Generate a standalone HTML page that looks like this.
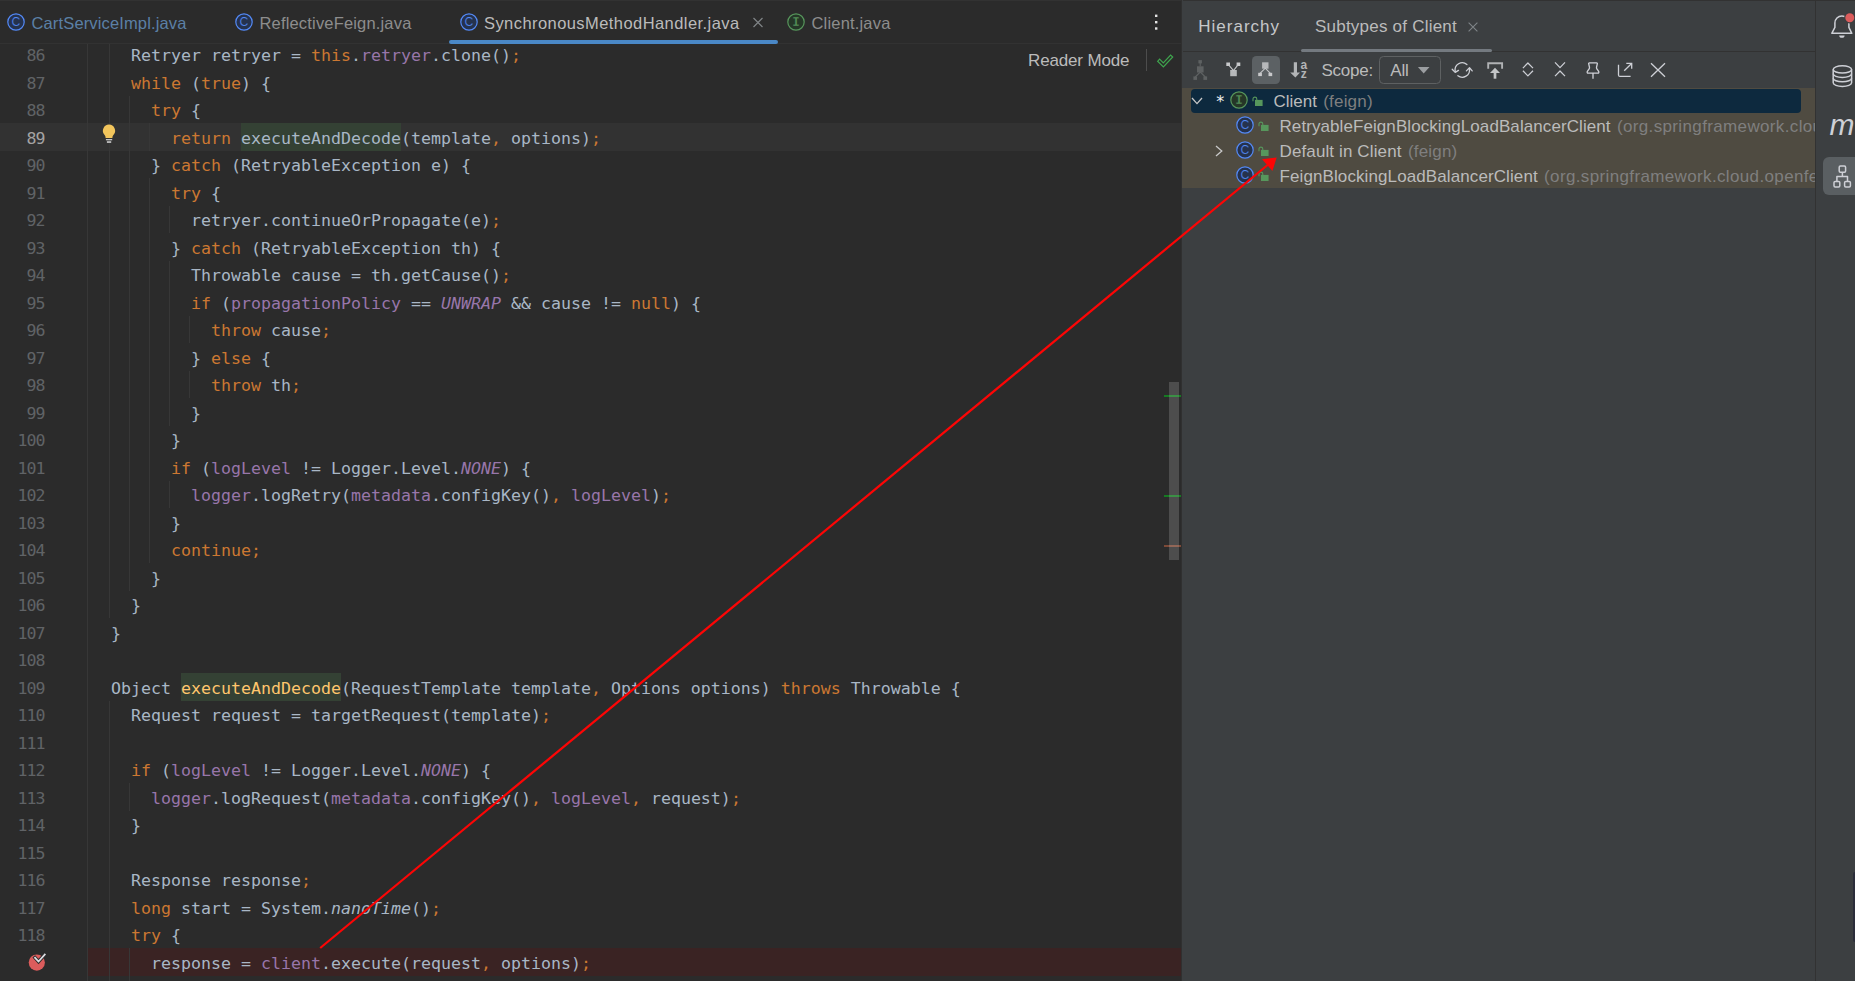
<!DOCTYPE html>
<html lang="en">
<head>
<meta charset="utf-8">
<title>SynchronousMethodHandler.java</title>
<style>
html,body{margin:0;padding:0;}
body{width:1855px;height:981px;overflow:hidden;background:#2b2b2b;position:relative;font-family:"Liberation Sans",sans-serif;color:#bbbbbb;}
.abs{position:absolute;}
#editor{position:absolute;left:0;top:0;width:1182px;height:981px;background:#2b2b2b;overflow:hidden;}
#code{position:absolute;left:0;top:0;width:1182px;height:981px;overflow:hidden;}
.cl{position:absolute;white-space:pre;font-family:"DejaVu Sans Mono","Liberation Mono",monospace;font-size:16.6px;line-height:27.5px;height:27.5px;color:#a9b7c6;letter-spacing:0.007px;}
.ln{position:absolute;left:0;width:44.4px;text-align:right;white-space:pre;font-family:"DejaVu Sans Mono","Liberation Mono",monospace;font-size:16.6px;line-height:27.5px;height:27.5px;color:#606366;letter-spacing:-1px;}
.ln.cur{color:#a4a3a3;}
.k{color:#cc7832;}
.f{color:#9876aa;}
.fi{color:#9876aa;font-style:italic;}
.i{font-style:italic;}
.hr{}
.hd{color:#ffc66d;}
.hl{position:absolute;background:#344134;}
.ig{position:absolute;width:1px;background:#373737;}
#curline{position:absolute;left:0;top:123px;width:1182px;height:28px;background:#323232;}
#bpline{position:absolute;left:88px;top:948px;width:1094px;height:28px;background:#3a2323;}
#gsep{position:absolute;left:87px;top:44px;width:1px;height:937px;background:#373737;}
#tabs{position:absolute;left:0;top:0;width:1182px;height:43px;background:#2b2b2b;border-bottom:1px solid #323232;}
.tab{position:absolute;top:1px;height:43px;line-height:45px;font-size:16.5px;white-space:pre;color:#a9a9a9;}
#hier{position:absolute;left:1183px;top:0;width:632px;height:981px;background:#3c3f41;}
#stripe{position:absolute;left:1815px;top:0;width:40px;height:981px;background:#3c3f41;border-left:1px solid #323232;box-sizing:border-box;}
.ui{position:absolute;white-space:pre;}

.topline{position:absolute;left:0;top:0;width:100%;height:1px;background:#323232;}
#tabline{position:absolute;left:449px;top:40px;width:329px;height:4px;border-radius:2px;background:#4a88c7;}
#hier .hsep{position:absolute;left:0;top:51px;width:632px;height:1px;background:#323232;}
#hier .htop{position:absolute;left:0;top:0;width:672px;height:1px;background:#323232;}
#tree{position:absolute;left:0;top:88.4px;width:632px;height:99.85px;background:#4f4b41;overflow:hidden;}
.trow{position:absolute;left:0;width:632px;height:25px;}
.tt{position:absolute;white-space:pre;font-size:17px;line-height:24px;top:1px;color:#bbbbbb;}
.tg{color:#7f7f7f;letter-spacing:0.2px;margin-left:1.5px;}
</style>
</head>
<body>
<div id="editor">
  <div id="curline"></div>
  <div id="bpline"></div>
  <div id="code">
<div class="ig" style="left:109.0px;top:40.5px;height:577.5px"></div>
<div class="ig" style="left:109.0px;top:700.5px;height:302.5px"></div>
<div class="ig" style="left:129.0px;top:95.5px;height:495.0px"></div>
<div class="ig" style="left:129.0px;top:783.0px;height:27.5px"></div>
<div class="ig" style="left:129.0px;top:948.0px;height:55.0px"></div>
<div class="ig" style="left:149.0px;top:123.0px;height:27.5px"></div>
<div class="ig" style="left:149.0px;top:178.0px;height:385.0px"></div>
<div class="ig" style="left:169.0px;top:205.5px;height:27.5px"></div>
<div class="ig" style="left:169.0px;top:260.5px;height:165.0px"></div>
<div class="ig" style="left:169.0px;top:480.5px;height:27.5px"></div>
<div class="ig" style="left:189.0px;top:315.5px;height:27.5px"></div>
<div class="ig" style="left:189.0px;top:370.5px;height:27.5px"></div>
<div class="hl" style="left:241px;top:123px;width:160px;height:28px"></div>
<div class="hl" style="left:181px;top:673px;width:160px;height:28px"></div>
<div class="ln" style="top:42px">86</div>
<div class="cl" style="top:42px;left:131.0px">Retryer retryer = <span class="k">this</span>.<span class="f">retryer</span>.clone()<span class="k">;</span></div>
<div class="ln" style="top:70px">87</div>
<div class="cl" style="top:70px;left:131.0px"><span class="k">while</span> (<span class="k">true</span>) {</div>
<div class="ln" style="top:97px">88</div>
<div class="cl" style="top:97px;left:151.0px"><span class="k">try</span> {</div>
<div class="ln cur" style="top:125px">89</div>
<div class="cl" style="top:125px;left:171.0px"><span class="k">return</span> <span class="hr">executeAndDecode</span>(template<span class="k">,</span> options)<span class="k">;</span></div>
<div class="ln" style="top:152px">90</div>
<div class="cl" style="top:152px;left:151.0px">} <span class="k">catch</span> (RetryableException e) {</div>
<div class="ln" style="top:180px">91</div>
<div class="cl" style="top:180px;left:171.0px"><span class="k">try</span> {</div>
<div class="ln" style="top:207px">92</div>
<div class="cl" style="top:207px;left:191.0px">retryer.continueOrPropagate(e)<span class="k">;</span></div>
<div class="ln" style="top:235px">93</div>
<div class="cl" style="top:235px;left:171.0px">} <span class="k">catch</span> (RetryableException th) {</div>
<div class="ln" style="top:262px">94</div>
<div class="cl" style="top:262px;left:191.0px">Throwable cause = th.getCause()<span class="k">;</span></div>
<div class="ln" style="top:290px">95</div>
<div class="cl" style="top:290px;left:191.0px"><span class="k">if</span> (<span class="f">propagationPolicy</span> == <span class="fi">UNWRAP</span> &amp;&amp; cause != <span class="k">null</span>) {</div>
<div class="ln" style="top:317px">96</div>
<div class="cl" style="top:317px;left:211.0px"><span class="k">throw</span> cause<span class="k">;</span></div>
<div class="ln" style="top:345px">97</div>
<div class="cl" style="top:345px;left:191.0px">} <span class="k">else</span> {</div>
<div class="ln" style="top:372px">98</div>
<div class="cl" style="top:372px;left:211.0px"><span class="k">throw</span> th<span class="k">;</span></div>
<div class="ln" style="top:400px">99</div>
<div class="cl" style="top:400px;left:191.0px">}</div>
<div class="ln" style="top:427px">100</div>
<div class="cl" style="top:427px;left:171.0px">}</div>
<div class="ln" style="top:455px">101</div>
<div class="cl" style="top:455px;left:171.0px"><span class="k">if</span> (<span class="f">logLevel</span> != Logger.Level.<span class="fi">NONE</span>) {</div>
<div class="ln" style="top:482px">102</div>
<div class="cl" style="top:482px;left:191.0px"><span class="f">logger</span>.logRetry(<span class="f">metadata</span>.configKey()<span class="k">,</span> <span class="f">logLevel</span>)<span class="k">;</span></div>
<div class="ln" style="top:510px">103</div>
<div class="cl" style="top:510px;left:171.0px">}</div>
<div class="ln" style="top:537px">104</div>
<div class="cl" style="top:537px;left:171.0px"><span class="k">continue;</span></div>
<div class="ln" style="top:565px">105</div>
<div class="cl" style="top:565px;left:151.0px">}</div>
<div class="ln" style="top:592px">106</div>
<div class="cl" style="top:592px;left:131.0px">}</div>
<div class="ln" style="top:620px">107</div>
<div class="cl" style="top:620px;left:111.0px">}</div>
<div class="ln" style="top:647px">108</div>
<div class="ln" style="top:675px">109</div>
<div class="cl" style="top:675px;left:111.0px">Object <span class="hd">executeAndDecode</span>(RequestTemplate template<span class="k">,</span> Options options) <span class="k">throws</span> Throwable {</div>
<div class="ln" style="top:702px">110</div>
<div class="cl" style="top:702px;left:131.0px">Request request = targetRequest(template)<span class="k">;</span></div>
<div class="ln" style="top:730px">111</div>
<div class="ln" style="top:757px">112</div>
<div class="cl" style="top:757px;left:131.0px"><span class="k">if</span> (<span class="f">logLevel</span> != Logger.Level.<span class="fi">NONE</span>) {</div>
<div class="ln" style="top:785px">113</div>
<div class="cl" style="top:785px;left:151.0px"><span class="f">logger</span>.logRequest(<span class="f">metadata</span>.configKey()<span class="k">,</span> <span class="f">logLevel</span><span class="k">,</span> request)<span class="k">;</span></div>
<div class="ln" style="top:812px">114</div>
<div class="cl" style="top:812px;left:131.0px">}</div>
<div class="ln" style="top:840px">115</div>
<div class="ln" style="top:867px">116</div>
<div class="cl" style="top:867px;left:131.0px">Response response<span class="k">;</span></div>
<div class="ln" style="top:895px">117</div>
<div class="cl" style="top:895px;left:131.0px"><span class="k">long</span> start = System.<span class="i">nanoTime</span>()<span class="k">;</span></div>
<div class="ln" style="top:922px">118</div>
<div class="cl" style="top:922px;left:131.0px"><span class="k">try</span> {</div>
<div class="ln" style="top:950px"></div>
<div class="cl" style="top:950px;left:151.0px">response = <span class="f">client</span>.execute(request<span class="k">,</span> options)<span class="k">;</span></div>
  </div>
  <div id="gsep"></div>
  <div id="tabs">
    <div class="topline"></div>
    <svg class="abs" style="left:7px;top:13px" width="18" height="18" viewBox="0 0 18 18"><circle cx="9" cy="9" r="8.2" fill="#25324d" stroke="#548af7" stroke-width="1.2"/><text x="9" y="13.3" text-anchor="middle" font-family="Liberation Sans, sans-serif" font-size="12.2" fill="#548af7" stroke="#25324d" stroke-width="0.2">C</text></svg>
    <div class="tab" style="left:31.5px;color:#5b80a6;letter-spacing:0.14px">CartServiceImpl.java</div>
    <svg class="abs" style="left:235px;top:13px" width="18" height="18" viewBox="0 0 18 18"><circle cx="9" cy="9" r="8.2" fill="#25324d" stroke="#548af7" stroke-width="1.2"/><text x="9" y="13.3" text-anchor="middle" font-family="Liberation Sans, sans-serif" font-size="12.2" fill="#548af7" stroke="#25324d" stroke-width="0.2">C</text></svg>
    <div class="tab" style="left:259.5px;color:#8d8d8d;letter-spacing:0.17px">ReflectiveFeign.java</div>
    <svg class="abs" style="left:460px;top:13px" width="18" height="18" viewBox="0 0 18 18"><circle cx="9" cy="9" r="8.2" fill="#25324d" stroke="#548af7" stroke-width="1.2"/><text x="9" y="13.3" text-anchor="middle" font-family="Liberation Sans, sans-serif" font-size="12.2" fill="#548af7" stroke="#25324d" stroke-width="0.2">C</text></svg>
    <div class="tab" style="left:484px;color:#bbbbbb;letter-spacing:0.43px">SynchronousMethodHandler.java</div>
    <svg class="abs" style="left:752px;top:17px" width="12" height="12" viewBox="0 0 12 12"><path d="M1.5 1 L10.5 10 M10.5 1 L1.5 10" stroke="#7f8386" stroke-width="1.2" fill="none"/></svg>
    <div id="tabline"></div>
    <svg class="abs" style="left:787px;top:13px" width="18" height="18" viewBox="0 0 18 18"><circle cx="9" cy="9" r="8.2" fill="#253627" stroke="#57965c" stroke-width="1.2"/><text x="9" y="13" text-anchor="middle" font-family="Liberation Mono, monospace" font-size="12.5" font-weight="bold" fill="#57965c" stroke="#253627" stroke-width="0.3">I</text></svg>
    <div class="tab" style="left:811.5px;color:#8d8d8d;letter-spacing:0.18px">Client.java</div>
    <svg class="abs" style="left:1152px;top:12px" width="8" height="20" viewBox="0 0 8 20"><rect x="3" y="2.6" width="2.4" height="2.4" fill="#e4e4e4"/><rect x="3" y="9" width="2.4" height="2.4" fill="#e4e4e4"/><rect x="3" y="15.3" width="2.4" height="2.4" fill="#e4e4e4"/></svg>
  </div>
  <div class="ui" style="left:1028px;top:49px;font-size:17px;line-height:24px;color:#bbbbbb;letter-spacing:-0.15px">Reader Mode</div>
  <div class="abs" style="left:1146px;top:49px;width:1px;height:22px;background:#4d4d4d"></div>
  <svg class="abs" style="left:1155px;top:52px" width="20" height="18" viewBox="0 0 20 18"><path d="M2.6 9.3 L4.6 7.2 L8.3 10.9 L15.6 3 L17.7 5 L8.4 15 Z" fill="none" stroke="#3fa54e" stroke-width="1.2" stroke-linejoin="miter"/></svg>
  <div class="abs" style="left:1164px;top:395px;width:17px;height:2px;background:#167a22"></div>
  <div class="abs" style="left:1164px;top:495px;width:17px;height:2px;background:#167a22"></div>
  <div class="abs" style="left:1164px;top:545px;width:17px;height:2px;background:#7d4a38"></div>
  <div class="abs" style="left:1169px;top:382px;width:10px;height:178px;background:rgba(255,255,255,0.165)"></div>
  <svg class="abs" style="left:100px;top:122px" width="18" height="24" viewBox="0 0 18 24"><path d="M9 2.6 a6.1 6.1 0 0 1 4.6 10.1 c-0.9 1.1 -1.2 2 -1.2 3.3 h-6.8 c0 -1.3 -0.3 -2.2 -1.2 -3.3 A6.1 6.1 0 0 1 9 2.6 Z" fill="#f2c55c"/><rect x="5.9" y="17.1" width="6.3" height="1.2" fill="#d4d4d4"/><rect x="6.9" y="19.2" width="4.3" height="1.7" fill="#c4c4c4"/></svg>
  <svg class="abs" style="left:26px;top:950px" width="24" height="24" viewBox="0 0 24 24"><circle cx="10.8" cy="12.6" r="8.1" fill="#db5c5c"/><path d="M9 7.7 L12.5 11.5 L18.8 4.5" fill="none" stroke="#2b2b2b" stroke-width="3.6" stroke-linecap="square"/><path d="M9 7.7 L12.5 11.5 L18.8 4.5" fill="none" stroke="#dcdde2" stroke-width="1.7" stroke-linecap="square"/></svg>
</div>
<div class="abs" style="left:1182px;top:0;width:1px;height:981px;background:#3c3f41"></div>
<div class="abs" style="left:1182px;top:88.4px;width:1px;height:99.85px;background:#4f4b41"></div>
<div class="abs" style="left:1181px;top:0;width:1px;height:981px;background:#303030"></div>
<div id="hier">
  <div class="htop"></div>
  <div class="ui" style="left:15.3px;top:15px;font-size:17px;line-height:24px;color:#c6c8ca;letter-spacing:1px">Hierarchy</div>
  <div class="ui" style="left:132px;top:15px;font-size:17px;line-height:24px;color:#bbbbbb;letter-spacing:0.22px">Subtypes of Client</div>
  <svg class="abs" style="left:284px;top:21px" width="12" height="12" viewBox="0 0 12 12"><path d="M1.6 1.6 L10.4 10.4 M10.4 1.6 L1.6 10.4" stroke="#7f8488" stroke-width="1.1" fill="none"/></svg>
  <div class="hsep"></div>
  <div class="abs" style="left:117.5px;top:48.6px;width:191.5px;height:3.5px;border-radius:2px;background:#747a80"></div>

  <!-- toolbar -->
  <svg class="abs" style="left:7px;top:56px" width="22" height="28" viewBox="0 0 22 28">
    <g fill="#5e6162" stroke="none"><rect x="8.4" y="4.1" width="3.5" height="3.3"/><rect x="7" y="10.3" width="6.6" height="6.2"/><rect x="3.4" y="20.4" width="3.6" height="3.5"/><rect x="13.4" y="20.4" width="3.7" height="3.5"/></g>
    <path d="M10.2 7 V10.5 M10.3 16 L5.2 21 M10.3 16 L15.3 21" stroke="#5e6162" stroke-width="1.1" fill="none"/>
  </svg>
  <svg class="abs" style="left:40px;top:56px" width="22" height="28" viewBox="0 0 22 28">
    <g stroke="none"><rect x="3.3" y="6.5" width="3.7" height="3.5" fill="#c8c9cb"/><rect x="13.6" y="6.5" width="3.7" height="3.5" fill="#c8c9cb"/><rect x="7.2" y="14" width="6.6" height="6.2" fill="#b6b8ba"/></g>
    <path d="M5.4 8.6 L10.5 14.6 L15.2 8.6" stroke="#c3c5c7" stroke-width="1.15" fill="none"/>
  </svg>
  <div class="abs" style="left:69px;top:56px;width:28px;height:28px;border-radius:4.5px;background:#5c6164"></div>
  <svg class="abs" style="left:72px;top:56px" width="22" height="28" viewBox="0 0 22 28">
    <g stroke="none"><rect x="7.1" y="6.3" width="6.4" height="6.4" fill="#b6b8ba"/><rect x="3.2" y="16.8" width="3.7" height="3.3" fill="#c8c9cb"/><rect x="13.5" y="16.8" width="3.7" height="3.3" fill="#c8c9cb"/></g>
    <path d="M5 17.4 L10.3 12.2 L15.4 17.4" stroke="#c3c5c7" stroke-width="1.15" fill="none"/>
  </svg>
  <svg class="abs" style="left:105px;top:56px" width="22" height="28" viewBox="0 0 22 28">
    <path d="M5.8 6.2 H9 V16.4 H12 L7.4 21.6 L2.2 16.4 H5.8 Z" fill="#b2b4b6"/>
    <text x="12.6" y="13" font-family="Liberation Sans, sans-serif" font-size="12" font-weight="bold" fill="#b2b4b6">a</text>
    <text x="12.8" y="21.7" font-family="Liberation Sans, sans-serif" font-size="12" font-weight="bold" fill="#b2b4b6">z</text>
  </svg>
  <div class="ui" style="left:138.5px;top:59px;font-size:17px;line-height:24px;color:#bbbbbb;letter-spacing:-0.25px">Scope:</div>
  <div class="abs" style="left:196px;top:56px;width:62px;height:27.5px;box-sizing:border-box;border:1px solid #5e6162;border-radius:4.5px"></div>
  <div class="ui" style="left:207.3px;top:59px;font-size:17px;line-height:24px;color:#bbbbbb;letter-spacing:-0.2px">All</div>
  <svg class="abs" style="left:234px;top:66px" width="14" height="9" viewBox="0 0 14 9"><path d="M0.9 1 H12.5 L6.7 7.4 Z" fill="#9b9ea1"/></svg>

  <!-- refresh -->
  <svg class="abs" style="left:267px;top:58px" width="24" height="24" viewBox="0 0 24 24" fill="none" stroke="#ced0d6" stroke-width="1.3" stroke-linecap="round" stroke-linejoin="round">
    <path d="M16.9 6.5 A7.2 7.2 0 0 0 5.2 13.4"/><path d="M2.2 11.2 L5.2 14.4 L8.5 12.4"/>
    <path d="M7.9 17.7 A7.2 7.2 0 0 0 19.4 10.8"/><path d="M16.4 12.9 L19.5 9.8 L22.2 12.9"/>
  </svg>
  <!-- export / autoscroll -->
  <svg class="abs" style="left:300px;top:58px" width="24" height="24" viewBox="0 0 24 24" fill="none" stroke="#b0b2b4" stroke-width="1.4">
    <path d="M5.2 10.7 V5.2 H19.1 V10.7" stroke-width="1.9"/><path d="M12 20.7 V13" stroke="#c3c5c7" stroke-width="2.7"/><path d="M7 15 L12 9.8 L17 15 Z" fill="#c3c5c7" stroke="none"/>
  </svg>
  <!-- expand all -->
  <svg class="abs" style="left:333px;top:58px" width="24" height="24" viewBox="0 0 24 24" fill="none" stroke="#ced0d6" stroke-width="1.25" stroke-linejoin="round">
    <path d="M6.9 10.1 L11.9 5 L17 10.1"/><path d="M6.9 12.8 L11.9 17.9 L17 12.8"/>
  </svg>
  <!-- collapse all -->
  <svg class="abs" style="left:365px;top:58px" width="24" height="24" viewBox="0 0 24 24" fill="none" stroke="#ced0d6" stroke-width="1.25" stroke-linejoin="round">
    <path d="M7 4.4 L12 9.6 L17 4.4"/><path d="M7 18.1 L12 13 L17 18.1"/>
  </svg>
  <!-- pin -->
  <svg class="abs" style="left:398px;top:58px" width="24" height="24" viewBox="0 0 24 24" fill="none" stroke="#ced0d6" stroke-width="1.35" stroke-linejoin="round">
    <path d="M8.4 4.9 H15.6 Q16.5 4.9 16.3 5.8 L15.5 9.4 Q15.4 10.4 16.1 11.2 L17.6 13.3 Q18.3 15.1 16.8 15.1 H7.2 Q5.7 15.1 6.4 13.3 L7.9 11.2 Q8.6 10.4 8.5 9.4 L7.7 5.8 Q7.5 4.9 8.4 4.9 Z"/><path d="M12 15.1 V20.7"/>
  </svg>
  <!-- open in window -->
  <svg class="abs" style="left:430px;top:58px" width="24" height="24" viewBox="0 0 24 24" fill="none" stroke="#ced0d6" stroke-width="1.3">
    <path d="M5.5 6.8 V16.9 Q5.5 18.4 7 18.4 H17.6"/><path d="M11.2 12.8 L18.6 5.5"/><path d="M13.3 5.4 H18.7 V10.7"/>
  </svg>
  <!-- close -->
  <svg class="abs" style="left:463px;top:58px" width="24" height="24" viewBox="0 0 24 24" fill="none" stroke="#ced0d6" stroke-width="1.3">
    <path d="M5 5.3 L19 18.7 M19 5.3 L5 18.7"/>
  </svg>

  <div id="tree">
    <div class="abs" style="left:7.5px;top:0.3px;width:610px;height:24.2px;border-radius:4px;background:#0d293e"></div>
    <div class="trow" style="top:0.6px">
      <svg class="abs" style="left:7px;top:6px" width="14" height="12" viewBox="0 0 14 12"><path d="M2 3 L7 8.6 L12 3" fill="none" stroke="#c8c8c8" stroke-width="1.3"/></svg>
      <div class="tt" style="left:33.2px;top:1px;font-family:'DejaVu Sans',sans-serif;font-size:16px;color:#f0f0f0;line-height:24px">*</div>
      <svg class="abs" style="left:47px;top:2.5px" width="18" height="18" viewBox="0 0 18 18"><circle cx="9" cy="9" r="8.2" fill="#253627" stroke="#57965c" stroke-width="1.2"/><text x="9" y="13" text-anchor="middle" font-family="Liberation Mono, monospace" font-size="12.5" font-weight="bold" fill="#57965c" stroke="#253627" stroke-width="0.3">I</text></svg>
      <svg class="abs" style="left:68.7px;top:7px" width="12" height="11" viewBox="0 0 12 11"><path d="M1 5.2 V3 a1.9 1.9 0 0 1 3.8 0 V4" fill="none" stroke="#57965c" stroke-width="1.1"/><rect x="3" y="3.9" width="7.6" height="6.1" fill="#57965c"/></svg>
      <div class="tt" style="left:90.5px;letter-spacing:0px">Client <span class="tg">(feign)</span></div>
    </div>
    <div class="trow" style="top:25.6px">
      <svg class="abs" style="left:53px;top:2.5px" width="18" height="18" viewBox="0 0 18 18"><circle cx="9" cy="9" r="8.2" fill="#25324d" stroke="#548af7" stroke-width="1.2"/><text x="9" y="13.3" text-anchor="middle" font-family="Liberation Sans, sans-serif" font-size="12.2" fill="#548af7" stroke="#25324d" stroke-width="0.2">C</text></svg>
      <svg class="abs" style="left:74.7px;top:7px" width="12" height="11" viewBox="0 0 12 11"><path d="M1 5.2 V3 a1.9 1.9 0 0 1 3.8 0 V4" fill="none" stroke="#57965c" stroke-width="1.1"/><rect x="3" y="3.9" width="7.6" height="6.1" fill="#57965c"/></svg>
      <div class="tt" style="left:96.5px;letter-spacing:0.08px">RetryableFeignBlockingLoadBalancerClient <span class="tg" style="letter-spacing:0.36px">(org.springframework.cloud.openfeign.loadbalancer)</span></div>
    </div>
    <div class="trow" style="top:50.6px">
      <svg class="abs" style="left:30px;top:5px" width="12" height="14" viewBox="0 0 12 14"><path d="M3 2 L8.8 7 L3 12" fill="none" stroke="#c8c8c8" stroke-width="1.3"/></svg>
      <svg class="abs" style="left:53px;top:2.5px" width="18" height="18" viewBox="0 0 18 18"><circle cx="9" cy="9" r="8.2" fill="#25324d" stroke="#548af7" stroke-width="1.2"/><text x="9" y="13.3" text-anchor="middle" font-family="Liberation Sans, sans-serif" font-size="12.2" fill="#548af7" stroke="#25324d" stroke-width="0.2">C</text></svg>
      <svg class="abs" style="left:74.7px;top:7px" width="12" height="11" viewBox="0 0 12 11"><path d="M1 5.2 V3 a1.9 1.9 0 0 1 3.8 0 V4" fill="none" stroke="#57965c" stroke-width="1.1"/><rect x="3" y="3.9" width="7.6" height="6.1" fill="#57965c"/></svg>
      <div class="tt" style="left:96.5px;letter-spacing:0.12px">Default in Client <span class="tg">(feign)</span></div>
    </div>
    <div class="trow" style="top:75.6px">
      <svg class="abs" style="left:53px;top:2.5px" width="18" height="18" viewBox="0 0 18 18"><circle cx="9" cy="9" r="8.2" fill="#25324d" stroke="#548af7" stroke-width="1.2"/><text x="9" y="13.3" text-anchor="middle" font-family="Liberation Sans, sans-serif" font-size="12.2" fill="#548af7" stroke="#25324d" stroke-width="0.2">C</text></svg>
      <svg class="abs" style="left:74.7px;top:7px" width="12" height="11" viewBox="0 0 12 11"><path d="M1 5.2 V3 a1.9 1.9 0 0 1 3.8 0 V4" fill="none" stroke="#57965c" stroke-width="1.1"/><rect x="3" y="3.9" width="7.6" height="6.1" fill="#57965c"/></svg>
      <div class="tt" style="left:96.5px;letter-spacing:0.1px">FeignBlockingLoadBalancerClient <span class="tg" style="letter-spacing:0.36px">(org.springframework.cloud.openfeign.loadbalancer)</span></div>
    </div>
  </div>
</div>
<div id="stripe">
  <div class="abs" style="left:0;top:0;width:40px;height:1px;background:#323232"></div>
  <svg class="abs" style="left:11.6px;top:12px" width="28" height="28" viewBox="0 0 28 28" fill="none" stroke="#ced0d6" stroke-width="1.5" stroke-linejoin="round">
    <path d="M3.8 21.3 L6.9 15.4 V11 a7 7 0 0 1 14 0 V15.4 L23.8 21.3 Z"/>
    <path d="M11.2 23.4 h5.4 a2.7 2.4 0 0 1 -5.4 0 Z" fill="#ced0d6" stroke="none"/>
    <circle cx="21.8" cy="5.8" r="5.7" fill="#3c3f41" stroke="none"/>
    <circle cx="21.8" cy="5.8" r="4.5" fill="#db5c5c" stroke="none"/>
  </svg>
  <svg class="abs" style="left:13px;top:62px" width="27" height="28" viewBox="0 0 27 28" fill="none" stroke="#ced0d6" stroke-width="1.5">
    <ellipse cx="13.4" cy="7.4" rx="9.2" ry="3.6"/>
    <path d="M4.2 7.4 V20.8 a9.2 3.6 0 0 0 18.4 0 V7.4"/>
    <path d="M4.2 11.8 a9.2 3.6 0 0 0 18.4 0"/>
    <path d="M4.2 16.2 a9.2 3.6 0 0 0 18.4 0"/>
  </svg>
  <div class="ui" style="left:13.5px;top:107px;font-size:30px;line-height:36px;font-style:italic;color:#ced0d6">m</div>
  <div class="abs" style="left:7px;top:157px;width:40px;height:38px;border-radius:6px;background:#5a5f62"></div>
  <svg class="abs" style="left:14px;top:162px" width="26" height="28" viewBox="0 0 26 28" fill="none" stroke="#ced0d6" stroke-width="1.5" stroke-linejoin="round">
    <rect x="9.2" y="4.1" width="6.4" height="6.2" rx="1.2"/>
    <rect x="4" y="19.4" width="5.8" height="5.6" rx="1.2"/>
    <rect x="14.6" y="19.4" width="5.8" height="5.6" rx="1.2"/>
    <path d="M12.4 10.3 V14.6 M6.9 19.4 V14.6 H17.5 V19.4"/>
  </svg>
  <div class="abs" style="left:37px;top:872px;width:4px;height:70px;border-radius:2px 0 0 2px;background:#2b2d3a"></div>
</div>
<svg class="abs" style="left:0;top:0;pointer-events:none" width="1855" height="981" viewBox="0 0 1855 981">
  <line x1="320.2" y1="948" x2="1270" y2="163" stroke="#fd0505" stroke-width="2.25"/>
  <polygon points="1276.7,157.5 1262,159.2 1272.4,171" fill="#fd0505"/>
</svg>
</body>
</html>
